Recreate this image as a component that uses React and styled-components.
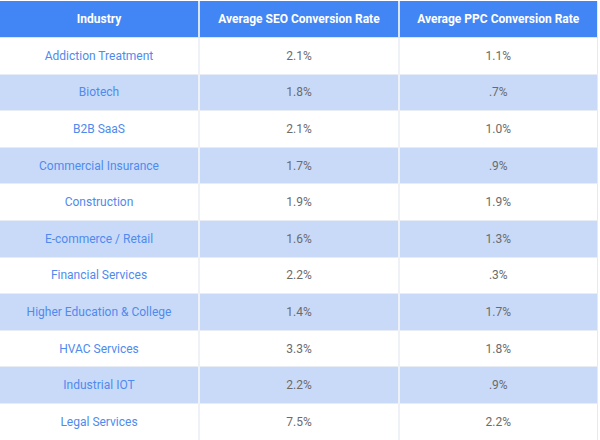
import React from 'react'
import styled, {createGlobalStyle} from 'styled-components'

const rows = [
    ['Addiction Treatment', '2.1%', '1.1%'],
    ['Biotech', '1.8%', '.7%'],
    ['B2B SaaS', '2.1%', '1.0%'],
    ['Commercial Insurance', '1.7%', '.9%'],
    ['Construction', '1.9%', '1.9%'],
    ['E-commerce / Retail', '1.6%', '1.3%'],
    ['Financial Services', '2.2%', '.3%'],
    ['Higher Education & College', '1.4%', '1.7%'],
    ['HVAC Services', '3.3%', '1.8%'],
    ['Industrial IOT', '2.2%', '.9%'],
    ['Legal Services', '7.5%', '2.2%'],
]

const App = () => {
    return (
        <>
            <Global/>
            <Wrapper>
                <Table>
                    <colgroup>
                        <col style={{width: 199}}/>
                        <col style={{width: 200}}/>
                        <col style={{width: 198}}/>
                    </colgroup>
                    <thead>
                        <tr>
                            <Head>Industry</Head>
                            <Head>Average SEO Conversion Rate</Head>
                            <Head>Average PPC Conversion Rate</Head>
                        </tr>
                    </thead>
                    <tbody>
                        {rows.map((r, i) => (
                            <Row key={r[0]} shaded={i % 2 === 1}>
                                <Name>{r[0]}</Name>
                                <Num>{r[1]}</Num>
                                <Num>{r[2]}</Num>
                            </Row>
                        ))}
                    </tbody>
                </Table>
            </Wrapper>
        </>
    )
}

export default App

const Global = createGlobalStyle`
body {
    margin: 0;
    background: #fff;
    font-family: Roboto, "Liberation Sans", sans-serif;
}
`

const Wrapper = styled.div`
width: 600px;
height: 440px;
padding-top: 1px;
box-sizing: border-box;
overflow: hidden;
`

const Table = styled.table`
width: 597px;
table-layout: fixed;
border-collapse: collapse;
border-right: 1px solid #e4e9f2;
`

const Head = styled.th`
height: 36px;
padding: 0;
background: #4285f4;
color: #fff;
font-size: 12px;
font-weight: 700;
text-align: center;
border-left: 2px solid #d6e4fc;
border-bottom: 1px solid #d6e4fc;
&:first-child {
    border-left: none;
}
`

const Row = styled.tr`
height: 36.6px;
background: ${({shaded}) => shaded ? '#c9daf8' : '#fff'};
& td {
    border-bottom: 1px solid #e8edf5;
}
`

const Name = styled.td`
padding: 0;
text-align: center;
font-size: 12px;
color: #4f8aee;
`

const Num = styled.td`
padding: 0;
text-align: center;
font-size: 12px;
color: #6b6b6b;
border-left: 2px solid #eef1f6;
`
